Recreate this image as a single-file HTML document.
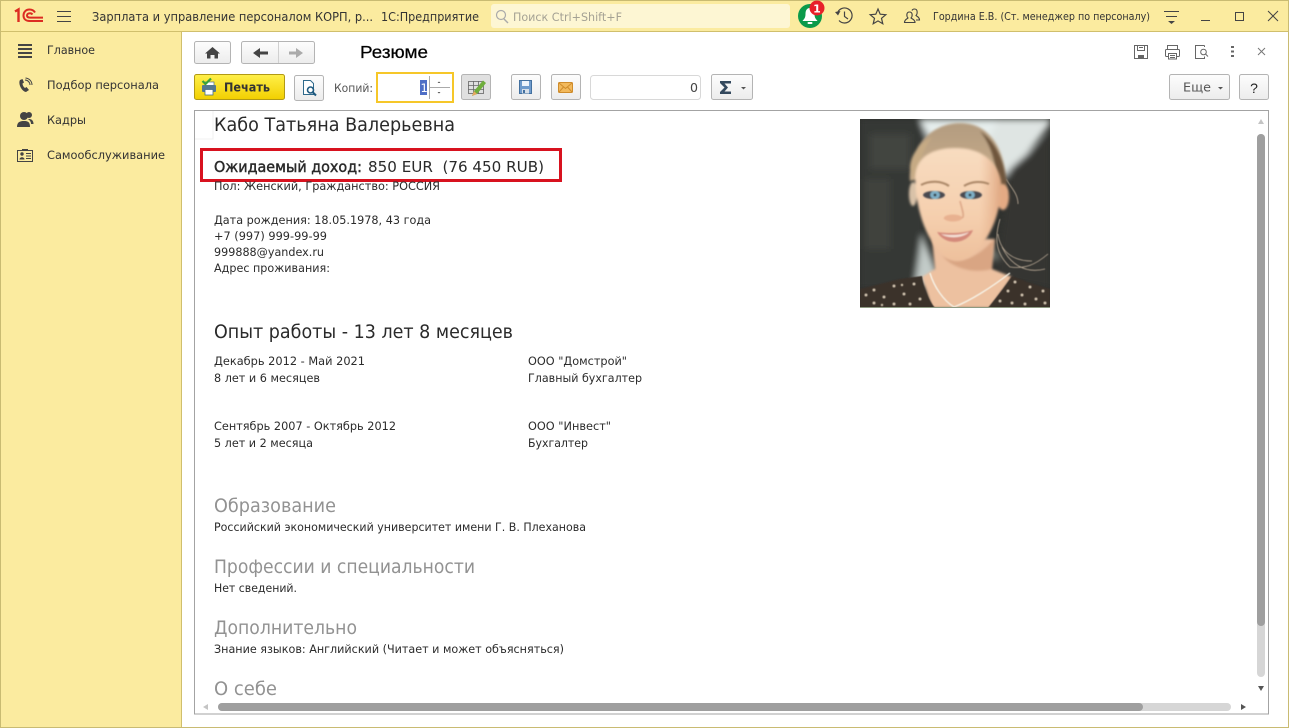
<!DOCTYPE html>
<html lang="ru"><head><meta charset="utf-8"><title>Резюме</title>
<style>
html,body{margin:0;padding:0;background:#fff;overflow:hidden}
svg{display:block}
text{font-family:"DejaVu Sans","Liberation Sans",sans-serif;white-space:pre}
.t{font-size:11.5px;fill:#333}
.s{font-size:11.5px;fill:#2b2b2b}
.h{font-size:18.5px;fill:#2a2a2a}
.g{font-size:18.5px;fill:#929292}
.btn{fill:url(#bg);stroke:#b4b4b4}
</style></head><body>
<svg width="1289" height="728" viewBox="0 0 1289 728" xmlns="http://www.w3.org/2000/svg">
<defs>
<linearGradient id="bg" x1="0" y1="0" x2="0" y2="1"><stop offset="0" stop-color="#fdfdfd"/><stop offset="1" stop-color="#ececec"/></linearGradient>
<linearGradient id="yb" x1="0" y1="0" x2="0" y2="1"><stop offset="0" stop-color="#fff04a"/><stop offset="1" stop-color="#f2cf00"/></linearGradient>
<linearGradient id="skin" x1="0" y1="0" x2="0" y2="1"><stop offset="0" stop-color="#f8dcc0"/><stop offset=".6" stop-color="#f5cfae"/><stop offset="1" stop-color="#eec09c"/></linearGradient>
<linearGradient id="skinx" x1="0" y1="0" x2="1" y2="0"><stop offset="0" stop-color="#f9dfc6" stop-opacity="0"/><stop offset=".75" stop-color="#e7b08b" stop-opacity="0"/><stop offset="1" stop-color="#d99c74" stop-opacity=".8"/></linearGradient>
<linearGradient id="hair" x1="0" y1="0" x2="0" y2="1"><stop offset="0" stop-color="#b39c80"/><stop offset="1" stop-color="#cdb08c"/></linearGradient>
<filter id="b4"><feGaussianBlur stdDeviation="3.5"/></filter>
<filter id="b2"><feGaussianBlur stdDeviation="1.2"/></filter>
<filter id="b1"><feGaussianBlur stdDeviation="0.7"/></filter>
<filter id="b05"><feGaussianBlur stdDeviation="0.4"/></filter>
<clipPath id="ph"><rect width="190" height="189"/></clipPath>
</defs>

<!-- window -->
<rect width="1289" height="728" fill="#fff"/>
<rect x="0" y="0" width="1289" height="31" fill="#fbeb9f"/>
<rect x="0" y="31" width="181" height="697" fill="#fbeb9f"/>
<rect x="0" y="31" width="1289" height="1" fill="#d0bf6d"/>
<rect x="181" y="31" width="1" height="697" fill="#d0bf6d"/>
<rect x="0.5" y="0.5" width="1288" height="727" fill="none" stroke="#c9bb72"/>

<!-- 1C logo -->
<g fill="none" stroke="#dc2c22" stroke-width="2">
<path d="M15 11.5 L18.5 9.5 V22" stroke-width="2.4"/>
<path d="M35 12.5 C33.5 10 31.5 9.5 29.5 9.5 C25.5 9.5 23.5 12.5 23.5 15.5 C23.5 19 26 21 29.5 21 H43"/>
<path d="M32.5 14.5 C31.8 13.5 31 13.2 30 13.2 C28 13.2 27 14.3 27 15.4 C27 16.8 28.2 17.6 30 17.6 H43"/>
</g>
<!-- burger -->
<g fill="#444"><rect x="57" y="11" width="14" height="1"/><rect x="57" y="16" width="14" height="1"/><rect x="57" y="21" width="14" height="1"/></g>

<text x="92" y="21" style="font-size:12px;fill:#333" textLength="281" lengthAdjust="spacingAndGlyphs">Зарплата и управление персоналом КОРП, р...</text>
<text x="381" y="21" style="font-size:12px;fill:#333" textLength="98" lengthAdjust="spacingAndGlyphs">1С:Предприятие</text>

<rect x="491" y="4" width="299" height="24" rx="3" fill="#fdf6d3"/>
<circle cx="501" cy="15" r="4.5" fill="none" stroke="#aaa" stroke-width="1.2"/><path d="M504 19 L508 23" stroke="#aaa" stroke-width="1.4"/>
<text x="513" y="21" style="font-size:11.5px;fill:#a5a294" textLength="109" lengthAdjust="spacingAndGlyphs">Поиск Ctrl+Shift+F</text>

<!-- bell -->
<circle cx="810" cy="16" r="12" fill="#0b9a4b"/>
<path d="M810 8 C806.5 8 805.5 11 805.5 14 C805.5 18 804 19 802.5 21 H817.5 C816 19 814.5 18 814.5 14 C814.5 11 813.5 8 810 8 Z" fill="#fff"/>
<rect x="807.5" y="22" width="5" height="2" rx="1" fill="#fff"/>
<circle cx="817" cy="8" r="7.5" fill="#e8202a"/>
<text x="817" y="12.5" text-anchor="middle" style="font-size:11px;font-weight:bold;fill:#fff">1</text>

<!-- history -->
<g fill="none" stroke="#444" stroke-width="1.2">
<path d="M837.5 13 A7.5 7.5 0 1 1 839 20.5"/><path d="M844.5 11.5 V16.5 L848 19"/></g>
<path d="M835 12 L840.5 11 L838 15.5 Z" fill="#444"/>
<!-- star -->
<path d="M878 9 L880.2 14.2 L885.8 14.7 L881.5 18.3 L882.8 23.8 L878 20.9 L873.2 23.8 L874.5 18.3 L870.2 14.7 L875.8 14.2 Z" fill="none" stroke="#444" stroke-width="1.2"/>
<!-- users -->
<g fill="none" stroke="#444" stroke-width="1.1">
<path d="M904.5 22.5 C904.5 19.5 907 19 908 18 C906.5 16.5 906 12 909.5 12 C913 12 912.5 16.5 911 18 C912 19 915 19.5 915 22.5 Z"/>
<path d="M912 10.5 C912.5 9.2 913.5 9 914.5 9 C918 9 917.5 14 916 15.5 C917 16.5 919.5 17 919.5 20 H916"/>
</g>
<text x="933" y="20" style="font-size:11px;fill:#333" textLength="217" lengthAdjust="spacingAndGlyphs">Гордина Е.В. (Ст. менеджер по персоналу)</text>
<!-- list menu -->
<g fill="#444"><rect x="1164" y="11" width="15" height="1"/><rect x="1166" y="16" width="11" height="1"/><path d="M1168 21 H1175 L1171.5 24 Z"/></g>
<!-- window controls -->
<rect x="1201" y="20" width="9" height="1" fill="#444"/>
<rect x="1235.5" y="12.5" width="8" height="8" fill="none" stroke="#444" stroke-width="1"/>
<path d="M1268 11 L1278 21 M1278 11 L1268 21" stroke="#444" stroke-width="1" fill="none"/>

<!-- sidebar -->
<g fill="#444"><rect x="18" y="44" width="14" height="2"/><rect x="18" y="48" width="14" height="2"/><rect x="18" y="52" width="14" height="2"/><rect x="18" y="56" width="14" height="2"/></g>
<path d="M20 80 C18 83 21 91 26 92 L29 90 L26.5 87 L25 88 C23.5 87 22.5 85 22.5 83.5 L24 82.5 L22.5 79 Z" fill="#444"/>
<path d="M25 80 A5 5 0 0 1 30 85 M25.5 78 A7 7 0 0 1 32 85" fill="none" stroke="#444" stroke-width="1"/>
<g fill="#444"><circle cx="24" cy="116" r="4"/><path d="M17 127 C17 122 20 121 24 121 C28 121 30 122 30 127 Z"/><circle cx="29" cy="115" r="3"/><path d="M29 119 C32 119 33.5 121 33.5 124 H31 C31 122 30 120 28 119.5 Z"/></g>
<g><rect x="17.5" y="150.5" width="15" height="11" fill="none" stroke="#444"/><circle cx="22" cy="154" r="1.7" fill="#444"/><path d="M19.5 159.5 C19.5 156.5 24.5 156.5 24.5 159.5 Z" fill="#444"/><path d="M26 153.5 H31 M26 156 H31 M26 158.5 H31" stroke="#444"/><rect x="22" y="149" width="6" height="1" fill="#444"/></g>
<text x="47" y="54" class="t" textLength="48" lengthAdjust="spacingAndGlyphs">Главное</text>
<text x="47" y="89" class="t" textLength="112" lengthAdjust="spacingAndGlyphs">Подбор персонала</text>
<text x="47" y="124" class="t" textLength="39" lengthAdjust="spacingAndGlyphs">Кадры</text>
<text x="47" y="159" class="t" textLength="118" lengthAdjust="spacingAndGlyphs">Самообслуживание</text>

<!-- nav buttons -->
<rect x="194.5" y="41.5" width="36" height="22" rx="2" class="btn"/>
<path d="M212.5 47 L220 53.5 H218 V58.5 H214.5 V55 H210.5 V58.5 H207 V53.5 H205 Z" fill="#444"/>
<rect x="241.5" y="41.5" width="73" height="22" rx="2" class="btn"/>
<rect x="278" y="42" width="1" height="21" fill="#d0d0d0"/>
<path d="M253 53 L260 48 V51.5 H268 V54.5 H260 V58 Z" fill="#444"/>
<path d="M303 53 L296 48 V51.5 H289 V54.5 H296 V58 Z" fill="#aaa"/>
<text x="360" y="58" style="font-family:'Liberation Sans',sans-serif;font-size:17.5px;fill:#000;stroke:#000;stroke-width:.25" textLength="68" lengthAdjust="spacingAndGlyphs">Резюме</text>

<!-- toolbar -->
<rect x="194.5" y="74.5" width="90" height="25" rx="2" fill="url(#yb)" stroke="#b29a14"/>
<rect x="205" y="82" width="9" height="4" fill="#fff" stroke="#4a6e87" stroke-width=".7"/>
<rect x="202" y="85" width="14" height="7" rx="1" fill="#55788f"/><rect x="205" y="89.5" width="8" height="5.5" fill="#fff" stroke="#4a6e87" stroke-width=".8"/>
<path d="M202.5 81 L205.5 84 L211 78.5" fill="none" stroke="#3aa23a" stroke-width="2.2"/>
<text x="224" y="91.5" style="font-size:12px;font-weight:bold;fill:#333" textLength="46" lengthAdjust="spacingAndGlyphs">Печать</text>
<rect x="294.5" y="75.5" width="29" height="25" rx="2" class="btn"/>
<path d="M303.5 80.5 H310.5 L313.5 83.5 V94.5 H303.5 Z" fill="#fff" stroke="#2f6a8c"/>
<circle cx="310.5" cy="90" r="3" fill="none" stroke="#1f5a80" stroke-width="1.6"/><path d="M312.5 92 L316 95.5" stroke="#1f5a80" stroke-width="2"/>
<text x="334" y="92" style="font-size:11.5px;fill:#555" textLength="39" lengthAdjust="spacingAndGlyphs">Копий:</text>
<rect x="377" y="73" width="76" height="29" fill="#fff" stroke="#f6c729" stroke-width="2"/>
<rect x="420" y="80" width="7" height="15" fill="#4f6fc6"/>
<text x="420.5" y="92" style="font-size:11.5px;fill:#fff">1</text>
<rect x="429" y="76" width="1" height="23" fill="#aaa"/><rect x="430" y="87" width="20" height="1" fill="#aaa"/>
<path d="M437.5 83 L439 81.5 L440.5 83 Z M437.5 92 H440.5 L439 93.5 Z" fill="#555"/>
<rect x="461.5" y="74.5" width="29" height="25" rx="2" fill="#e0e0e0" stroke="#b4b4b4"/>
<g fill="none" stroke="#666" stroke-width=".8"><rect x="468.5" y="81.5" width="15" height="12"/><path d="M468 85.5 H484 M468 89.5 H484 M473.5 81 V94 M478.5 81 V94"/></g>
<path d="M472 96 L474 91 L483 80.5 L486 83 L477 94 Z" fill="#6fae3c"/><path d="M472 96 L474 91 L477 94 Z" fill="#e8a860"/>
<rect x="511.5" y="74.5" width="29" height="25" rx="2" class="btn"/>
<path d="M519.5 80.5 H531.5 V93.5 H519.5 Z" fill="#6f9bcc" stroke="#43709f"/><rect x="522" y="81" width="7" height="5" fill="#eef4fb"/><rect x="522" y="89" width="7" height="4.5" fill="#d7dfe8"/><rect x="523" y="90" width="2" height="3" fill="#43709f"/>
<rect x="551.5" y="74.5" width="29" height="25" rx="2" class="btn"/>
<rect x="558.5" y="82.5" width="14" height="10" rx="1" fill="#f2b95c" stroke="#cf8c2b"/><path d="M559 83 L565.5 88.5 L572 83 M559 92 L563.5 87 M572 92 L567.5 87" fill="none" stroke="#cf8c2b"/>
<rect x="590.5" y="75.5" width="110" height="24" rx="3" fill="#fff" stroke="#d8d8d8"/>
<text x="690" y="92" style="font-size:12px;fill:#444" textLength="8" lengthAdjust="spacingAndGlyphs">0</text>
<rect x="711.5" y="74.5" width="41" height="25" rx="2" class="btn"/>
<path d="M720 81 H731 V83.5 H724.5 L728 87.5 L724.5 91.5 H731 V94 H720 V92 L724.5 87.5 L720 83 Z" fill="#34495e"/>
<path d="M741 87 H746 L743.5 89.5 Z" fill="#555"/>
<rect x="1169.5" y="74.5" width="60" height="25" rx="2" class="btn"/>
<text x="1183" y="91.5" style="font-size:12px;fill:#555" textLength="28" lengthAdjust="spacingAndGlyphs">Еще</text>
<path d="M1218 87 H1223 L1220.5 89.5 Z" fill="#555"/>
<rect x="1239.5" y="74.5" width="29" height="25" rx="2" class="btn"/>
<text x="1254" y="93" text-anchor="middle" style="font-size:14px;font-family:'Liberation Sans',sans-serif;fill:#222">?</text>

<!-- top right icons -->
<g fill="none" stroke="#666">
<path d="M1134.5 45.5 H1147.5 V58.5 H1134.5 Z"/><path d="M1137.5 45.5 V50.5 H1144.5 V45.5 M1139 47.5 H1143"/><rect x="1138" y="55" width="6" height="3.5" fill="#666" stroke="none"/>
<rect x="1165.5" y="49.5" width="14" height="7" rx="1"/><path d="M1167.5 49 V45.5 H1177.5 V49"/><rect x="1168.5" y="53.5" width="8" height="5.5" fill="#fff"/><path d="M1170 55.500 H1175 M1170 57.5 H1175"/>
<path d="M1204.5 45.5 H1195.5 V58.5 H1204.5 V56.5 M1204.5 45.5 V47"/><circle cx="1203.5" cy="52" r="2.8"/><path d="M1205.5 54 L1208 56.5"/>
</g>
<g fill="#666"><rect x="1231" y="46" width="3" height="2"/><rect x="1231" y="50.5" width="3" height="2"/><rect x="1231" y="55" width="3" height="2"/></g>
<path d="M1258 48 L1265 55 M1265 48 L1258 55" stroke="#777" fill="none"/>

<!-- frame -->
<rect x="194.5" y="110.5" width="1074" height="603.5" fill="#fff" stroke="#a3a3a3"/>
<path d="M213 111 V139 H195" fill="none" stroke="#f0f0f0"/>

<text x="214" y="131" style="font-size:19px;fill:#2a2a2a" textLength="241" lengthAdjust="spacingAndGlyphs">Кабо Татьяна Валерьевна</text>
<rect x="201.5" y="149.5" width="359" height="31" fill="none" stroke="#d8121f" stroke-width="3"/>
<text x="214" y="172" style="font-size:15px;fill:#2a2a2a;stroke:#2a2a2a;stroke-width:.45" textLength="148" lengthAdjust="spacingAndGlyphs">Ожидаемый доход:</text>
<text x="368" y="172" style="font-size:15px;fill:#2a2a2a" textLength="176" lengthAdjust="spacingAndGlyphs">850 EUR  (76 450 RUB)</text>
<text x="214" y="190" class="s" textLength="226" lengthAdjust="spacingAndGlyphs">Пол: Женский, Гражданство: РОССИЯ</text>
<text x="214" y="224" class="s" textLength="217" lengthAdjust="spacingAndGlyphs">Дата рождения: 18.05.1978, 43 года</text>
<text x="214" y="240" class="s" textLength="113" lengthAdjust="spacingAndGlyphs">+7 (997) 999-99-99</text>
<text x="214" y="256" class="s" textLength="110" lengthAdjust="spacingAndGlyphs">999888@yandex.ru</text>
<text x="214" y="272" class="s" textLength="116" lengthAdjust="spacingAndGlyphs">Адрес проживания:</text>

<text x="214" y="338" class="h" textLength="299" lengthAdjust="spacingAndGlyphs">Опыт работы - 13 лет 8 месяцев</text>
<text x="214" y="365" class="s" textLength="151" lengthAdjust="spacingAndGlyphs">Декабрь 2012 - Май 2021</text>
<text x="214" y="382" class="s" textLength="106" lengthAdjust="spacingAndGlyphs">8 лет и 6 месяцев</text>
<text x="528" y="365" class="s" textLength="99" lengthAdjust="spacingAndGlyphs">ООО "Домстрой"</text>
<text x="528" y="382" class="s" textLength="114" lengthAdjust="spacingAndGlyphs">Главный бухгалтер</text>
<text x="214" y="430" class="s" textLength="182" lengthAdjust="spacingAndGlyphs">Сентябрь 2007 - Октябрь 2012</text>
<text x="214" y="447" class="s" textLength="99" lengthAdjust="spacingAndGlyphs">5 лет и 2 месяца</text>
<text x="528" y="430" class="s" textLength="83" lengthAdjust="spacingAndGlyphs">ООО "Инвест"</text>
<text x="528" y="447" class="s" textLength="60" lengthAdjust="spacingAndGlyphs">Бухгалтер</text>

<text x="214" y="512" class="g" textLength="122" lengthAdjust="spacingAndGlyphs">Образование</text>
<text x="214" y="531" class="s" textLength="372" lengthAdjust="spacingAndGlyphs">Российский экономический университет имени Г. В. Плеханова</text>
<text x="214" y="573" class="g" textLength="261" lengthAdjust="spacingAndGlyphs">Профессии и специальности</text>
<text x="214" y="592" class="s" textLength="83" lengthAdjust="spacingAndGlyphs">Нет сведений.</text>
<text x="214" y="634" class="g" textLength="143" lengthAdjust="spacingAndGlyphs">Дополнительно</text>
<text x="214" y="653" class="s" textLength="350" lengthAdjust="spacingAndGlyphs">Знание языков: Английский (Читает и может объясняться)</text>
<text x="214" y="695" class="g" textLength="63" lengthAdjust="spacingAndGlyphs">О себе</text>

<!-- photo -->
<g transform="translate(860 119)" clip-path="url(#ph)">
<rect width="190" height="189" fill="#2f312e"/>
<g filter="url(#b4)">
<rect x="0" y="0" width="64" height="170" fill="#363835"/>
<rect x="10" y="15" width="40" height="35" fill="#43453f"/>
<rect x="5" y="60" width="25" height="70" fill="#3f423d"/>
<path d="M60 0 H142 L125 45 L70 25 Z" fill="#e6eeed"/>
<path d="M138 0 H190 V5 L165 38 L140 62 L120 40 Z" fill="#dfe5e3"/>
<path d="M150 50 L190 15 V170 L135 160 Z" fill="#343633"/>
<path d="M62 115 L82 165 H55 Z" fill="#c2cbc8"/>
<path d="M122 115 L140 140 H120 Z" fill="#7e837c"/>
</g>
<!-- wisps -->
<g fill="none" stroke="#b9a995" stroke-width=".8" filter="url(#b05)">
<path d="M140 100 C134 120 136 135 150 148 C165 150 175 146 188 135"/>
<path d="M138 115 C140 130 150 142 172 142"/>
<path d="M142 128 C150 145 165 155 185 150"/>
<path d="M146 60 C152 70 158 75 158 85"/>
</g>
<!-- hair -->
<g filter="url(#b2)">
<path d="M50 62 C48 30 70 4 100 4 C130 4 147 30 147 75 L135 60 L60 60 Z" fill="url(#hair)"/>
<path d="M120 12 C140 25 147 50 147 72 L137 62 C135 40 130 25 120 12 Z" fill="#6f563e"/>
<path d="M50 50 C50 35 60 25 72 18 C64 30 58 42 55 62 Z" fill="#c6aa84"/>
</g>
<!-- neck/chest -->
<g filter="url(#b2)">
<path d="M72 120 H135 L132 150 L152 158 L130 189 H72 L62 158 L75 150 Z" fill="#edc1a0"/>
<path d="M82 136 C95 146 115 142 134 120 L132 150 C115 155 92 150 82 136 Z" fill="#d9a583"/>
</g>
<!-- face -->
<g filter="url(#b2)">
<ellipse cx="143" cy="78" rx="6" ry="13" fill="#e4aa84"/>
<ellipse cx="53" cy="75" rx="4" ry="12" fill="#d9c2a8"/>
<path d="M55 58 C56 38 72 29 95 29 C120 29 136 40 141 62 C142 95 128 128 105 140 C98 143 92 142 86 138 C68 125 56 95 55 58 Z" fill="url(#skin)"/>
<path d="M55 58 C56 38 72 29 95 29 C120 29 136 40 141 62 C142 95 128 128 105 140 C98 143 92 142 86 138 C68 125 56 95 55 58 Z" fill="url(#skinx)"/>
</g>
<g filter="url(#b1)">
<path d="M61 66 C70 61 82 62 89 67" fill="none" stroke="#a98565" stroke-width="2"/>
<path d="M104 67 C112 62 122 62 129 65" fill="none" stroke="#a98565" stroke-width="2"/>
<ellipse cx="74" cy="76" rx="11" ry="4" fill="#4a4a50"/><ellipse cx="75" cy="76" rx="4.8" ry="4" fill="#7fb0c8"/><circle cx="75" cy="76" r="1.4" fill="#222"/>
<ellipse cx="111" cy="76" rx="11" ry="4" fill="#4a4a50"/><ellipse cx="110" cy="76" rx="4.8" ry="4" fill="#7fb0c8"/><circle cx="110" cy="76" r="1.4" fill="#222"/>
<path d="M100 82 C102 90 104 95 103 98 C98 102 90 103 84 99" fill="none" stroke="#dba585" stroke-width="1.5"/>
<ellipse cx="93" cy="99" rx="9" ry="3.5" fill="#e8b190"/>
<path d="M77 113 C90 115 104 114 113 111 C108 125 86 128 77 113 Z" fill="#d4897a"/>
<path d="M81 115 C90 117 103 116 109 113 C104 119 88 120 81 115 Z" fill="#f7e6dc"/>
</g>
<!-- dress -->
<path d="M0 170 L40 160 L62 157 C64 170 68 180 75 189 H0 Z" fill="#3a302a" filter="url(#b05)"/>
<path d="M190 170 L170 164 L152 157 C145 168 135 180 128 189 H190 Z" fill="#3a302a" filter="url(#b05)"/>
<g fill="#cfc2ae" filter="url(#b05)">
<circle cx="6" cy="176" r="1.5"/><circle cx="14" cy="171" r="1.5"/><circle cx="24" cy="178" r="1.5"/><circle cx="34" cy="167" r="1.5"/><circle cx="44" cy="175" r="1.5"/><circle cx="54" cy="165" r="1.5"/><circle cx="60" cy="180" r="1.5"/><circle cx="14" cy="184" r="1.5"/><circle cx="34" cy="185" r="1.5"/><circle cx="50" cy="185" r="1.5"/><circle cx="42" cy="166" r="1.2"/><circle cx="22" cy="186" r="1.2"/>
<circle cx="148" cy="172" r="1.5"/><circle cx="155" cy="163" r="1.5"/><circle cx="162" cy="176" r="1.5"/><circle cx="170" cy="168" r="1.5"/><circle cx="176" cy="180" r="1.5"/><circle cx="183" cy="172" r="1.5"/><circle cx="140" cy="182" r="1.5"/><circle cx="152" cy="184" r="1.5"/><circle cx="165" cy="185" r="1.5"/><circle cx="185" cy="184" r="1.5"/>
</g>
<path d="M70 154 C74 168 84 182 94 188 C110 182 132 168 150 154" fill="none" stroke="#f6f2e6" stroke-width="1.4" filter="url(#b05)"/>
<rect x="0" y="188" width="190" height="1" fill="#8d9a82"/>
</g>

<!-- scrollbars -->
<path d="M1258 124 H1264 L1261 119 Z" fill="#c4c4c4"/>
<rect x="1257" y="134" width="8" height="543" rx="4" fill="#d6d6d6"/>
<rect x="1257" y="134" width="8" height="492" rx="4" fill="#9f9f9f"/>
<path d="M1258 686 H1264 L1261 691 Z" fill="#555"/>
<path d="M208 704 V710 L203 707 Z" fill="#c4c4c4"/>
<rect x="218" y="703" width="1013" height="8" rx="4" fill="#d6d6d6"/>
<rect x="218" y="703" width="925" height="8" rx="4" fill="#9f9f9f"/>
<path d="M1241 704 V710 L1246 707 Z" fill="#555"/>
</svg>
</body></html>
